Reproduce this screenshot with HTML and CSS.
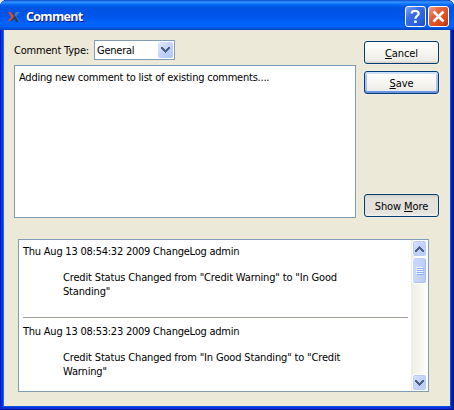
FILE: index.html
```html
<!DOCTYPE html>
<html lang="en">
<head>
<meta charset="utf-8">
<title>Comment</title>
<link rel="stylesheet" href="styles.css">
</head>
<body>
<div class="window">
  <header class="titlebar">
    <svg class="app-icon" width="14" height="12" viewBox="0 0 14 12"><path d="M9 1h4l-4 4 4 6H9L6 7l1-2z" fill="#3c86b8"/><path d="M1 1h4l4 5 3 5H9L7 8l-3 2H1l4-4z" fill="#293b67"/><path d="M1 1h3l3 4-1 2-3 3H1l3-4z" fill="#c94f45"/></svg>
    <h1 class="title">Comment</h1>
    <button class="caption help" aria-label="Help"><svg width="21" height="21" viewBox="0 0 21 21"><path d="M6.8 7.6V6.8Q7 4.8 10.2 4.8T13.7 7.4Q13.7 8.8 12.1 9.9T10.4 12.8" fill="none" stroke="#fff" stroke-width="2.2"/><path d="M9.2 14.5h2.5v2.5H9.2z" fill="#fff"/></svg></button>
    <button class="caption close" aria-label="Close"><svg width="21" height="21" viewBox="0 0 21 21"><path d="M5.5 5.5l10 10M15.5 5.5l-10 10" stroke="#fff" stroke-width="2.6"/></svg></button>
  </header>
  <main class="client">
    <section class="editor">
      <div class="fields">
        <div class="type-row">
          <span class="label">Comment Type:</span>
          <div class="combo"><span class="combo-value">General</span><span class="combo-arrow"><svg width="9" height="6" viewBox="0 0 9 6"><path d="M0 0h2v1h1v1h1v1h1v-1h1v-1h1v-1h2v2h-1v1h-1v1h-1v1h-1v1h-1v-1h-1v-1h-1v-1h-1v-1h-1z" fill="#4d6185"/></svg></span></div>
        </div>
        <div class="textbox">Adding new comment to list of existing comments....</div>
      </div>
      <div class="actions">
        <button class="btn"><u>C</u>ancel</button>
        <button class="btn default"><u>S</u>ave</button>
        <button class="btn pressed">Show <u>M</u>ore</button>
      </div>
    </section>
    <section class="log">
      <div class="entries">
        <article class="entry">
          <div class="stamp">Thu Aug 13 08:54:32 2009 ChangeLog admin</div>
          <div class="detail">Credit Status Changed from "Credit Warning" to "In Good<br>Standing"</div>
        </article>
        <article class="entry">
          <div class="stamp">Thu Aug 13 08:53:23 2009 ChangeLog admin</div>
          <div class="detail">Credit Status Changed from "In Good Standing" to "Credit<br>Warning"</div>
        </article>
      </div>
      <div class="scrollbar">
        <span class="sb-btn"><svg width="9" height="6" viewBox="0 0 9 6"><path d="M4 0h1v1h1v1h1v1h1v1h1v2h-2v-1h-1v-1h-1v-1h-1v1h-1v1h-1v1h-2v-2h1v-1h1v-1h1v-1h1z" fill="#4d6185"/></svg></span>
        <span class="sb-btn thumb"><i></i><i></i><i></i><i></i></span>
        <span class="sb-btn down"><svg width="9" height="6" viewBox="0 0 9 6"><path d="M0 0h2v1h1v1h1v1h1v-1h1v-1h1v-1h2v2h-1v1h-1v1h-1v1h-1v1h-1v-1h-1v-1h-1v-1h-1v-1h-1z" fill="#4d6185"/></svg></span>
      </div>
    </section>
  </main>
</div>
</body>
</html>
```
FILE: styles.css
```css
* { box-sizing: border-box; }
body {
  margin: 0;
  background: #ece9d8;
  font: 11px/14px "DejaVu Sans Condensed", "DejaVu Sans", sans-serif;
  font-stretch: condensed;
  color: #000;
}
.window {
  width: 454px;
  height: 410px;
  padding: 0 4px 4px;
  border-radius: 7px 7px 0 0;
  background: #0831d9;
  box-shadow: inset 1px 0 #0019cf, inset -1px 0 #00138c, inset 0 -1px #00138c, inset 3px 0 #0831d9, inset -3px 0 #001ea0, inset 0 -3px #0831d9, inset 4px 0 #166aee, inset -4px 0 #0855dd, inset 0 -4px #0855dd;
  overflow: hidden;
}
.titlebar {
  display: flex;
  align-items: center;
  height: 30px;
  margin: 0 -4px;
  padding: 3px 5px 0 7px;
  background: linear-gradient(#0a4cd0 0, #3593ff 7%, #127dff 12%, #0262ee 18%, #0054e3 26%, #0055eb 55%, #0262fc 76%, #0261f8 88%, #0052d6 95%, #0042b5 100%);
}
.app-icon { margin-right: 5px; }
.title {
  margin: 0;
  flex: 1;
  font: bold 12.5px/16px "Open Sans", "Noto Sans", sans-serif;
  letter-spacing: -0.7px;
  color: #fff;
  text-shadow: 1px 1px #0f1089;
}
.caption {
  width: 21px;
  height: 21px;
  padding: 0;
  border: 1px solid #fff;
  border-radius: 3px;
  overflow: hidden;
}
.caption svg { display: block; margin: -1px; }
.help { margin-right: 2px; background: linear-gradient(135deg, #7fa6f5, #3c6de4 35%, #2b5fe0 75%, #1f49c0); }
.close { background: linear-gradient(135deg, #f0a088, #e2603c 35%, #dc4819 75%, #b03010); }
.client {
  height: 376px;
  padding: 10px 11px 0 10px;
  background: #ece9d8;
}
.editor { display: flex; justify-content: space-between; height: 178px; }
.fields { width: 342px; }
.type-row { display: flex; align-items: center; height: 20px; margin-bottom: 5px; }
.label { width: 80px; padding-top: 2px; white-space: nowrap; letter-spacing: -0.2px; }
.combo {
  display: flex;
  justify-content: space-between;
  width: 81px;
  height: 20px;
  padding: 1px;
  border: 1px solid #7f9db9;
  background: #fff;
}
.combo-value { padding: 1px 0 0 1px; line-height: 15px; letter-spacing: -0.25px; }
.combo-arrow {
  display: grid;
  place-items: center;
  width: 15px;
  height: 16px;
  border-radius: 2px;
  background: linear-gradient(135deg, #e1eafe, #c3d3fd 50%, #aec8f7);
}
.textbox {
  height: 153px;
  padding: 5px 4px;
  border: 1px solid #7f9db9;
  background: #fff;
  white-space: nowrap;
  letter-spacing: -0.22px;
}
.actions { display: flex; flex-direction: column; width: 75px; padding-top: 1px; }
.btn {
  height: 23px;
  padding: 3px 0 0;
  margin-bottom: 7px;
  border: 1px solid #003c74;
  border-radius: 3px;
  background: linear-gradient(#fff, #f6f5f0 55%, #ecebe6 88%, #d6d0c5);
  box-shadow: 0 0 0 1px #f1efe5;
  font: inherit;
  letter-spacing: -0.1px;
  color: #000;
  white-space: nowrap;
}
.btn u { text-underline-offset: 1px; text-decoration-thickness: 1px; }
.btn.default { box-shadow: inset 0 2px #cee0fc, inset 0 -2px #6f92e5, inset 2px 0 #aac3f2, inset -2px 0 #aac3f2, 0 0 0 1px #f1efe5; }
.btn.pressed { margin: 93px 0 0; background: linear-gradient(#d2cec4, #e2e0d9 15%, #e5e3dc 85%, #f1f0ec); }
.log {
  display: flex;
  justify-content: space-between;
  width: 411px;
  height: 153px;
  margin: 21px 0 0 4px;
  border: 1px solid #7f9db9;
  background: #fff;
}
.entries { width: 385px; margin-left: 4px; padding-top: 5px; white-space: nowrap; }
.entry { height: 72px; }
.entry + .entry { padding-top: 7px; border-top: 1px solid #a5a597; }
.stamp { letter-spacing: -0.23px; }
.detail { margin: 12px 0 0 40px; letter-spacing: -0.16px; }
.scrollbar {
  display: flex;
  flex-direction: column;
  width: 17px;
  padding: 0 1px;
  background: linear-gradient(90deg, #eeede5, #fefefb);
}
.sb-btn {
  display: grid;
  place-items: center;
  height: 17px;
  border: 1px solid #fff;
  border-radius: 3px;
  background: linear-gradient(135deg, #d8e3fe, #c2d2fd 50%, #b8cbf8);
  box-shadow: inset 0 0 0 1px #bccdf5;
}
.thumb { height: 27px; align-content: center; gap: 1px; background: linear-gradient(90deg, #cad8fe, #bbcdf9); box-shadow: inset -1px -1px #a8bff0; }
.thumb i { width: 7px; height: 1px; background: #eef4fe; box-shadow: 1px 1px #8cb0f8; }
.down { margin-top: auto; }
```
